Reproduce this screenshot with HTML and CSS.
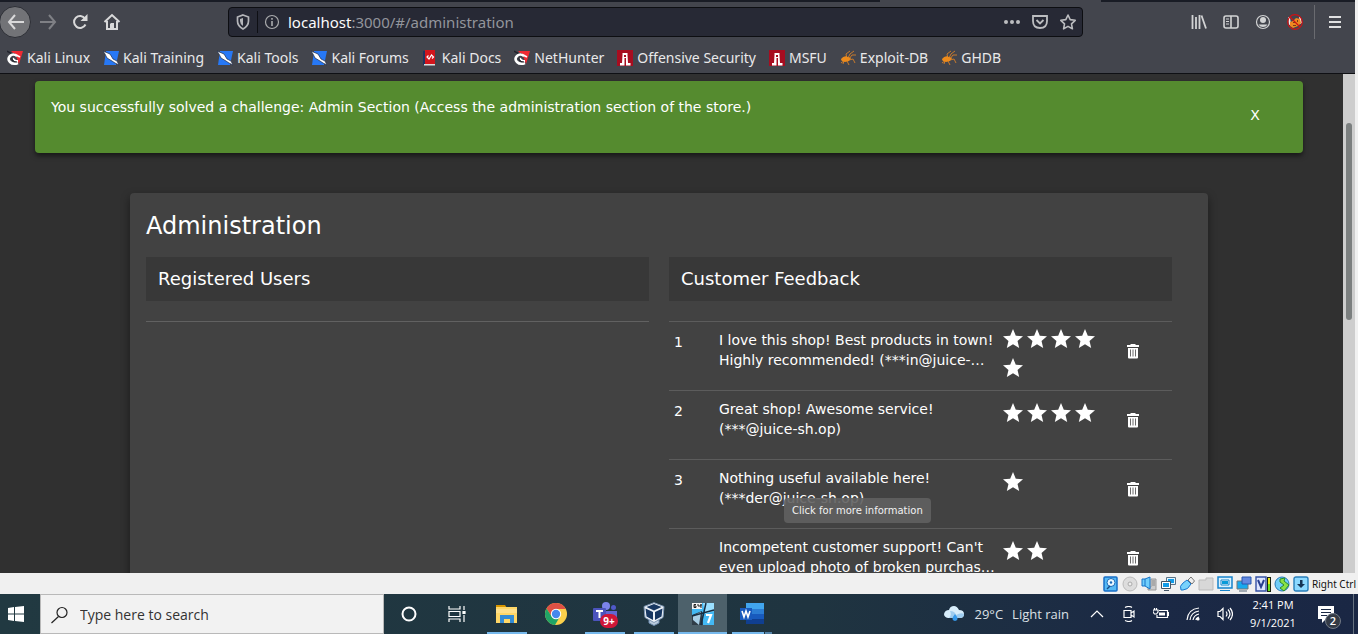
FILE: index.html
```html
<!DOCTYPE html>
<html lang="en">
<head>
<meta charset="utf-8">
<title>Administration</title>
<link rel="stylesheet" href="styles.css">
</head>
<body>
<svg class="defs" aria-hidden="true">
  <symbol id="star" viewBox="0 0 24 24"><path fill="#fff" d="M12 17.27 18.18 21l-1.64-7.03L22 9.24l-7.19-.61L12 2 9.19 8.63 2 9.24l5.46 4.73L5.82 21z"/></symbol>
  <symbol id="trash" viewBox="0 0 14 16"><path fill="#fff" d="M1 2h3.500V1h5v1H13v2H1zM2 5h10v9.500q0 1-1 1H3q-1 0-1-1z"/><path stroke="#6a6a6a" d="M4.500 6.500v7M7 6.500v7M9.500 6.500v7"/></symbol>
  <symbol id="kali" viewBox="0 0 16 16"><path fill="#ef2a33" d="M4 1h12l-4 13-3-8z"/><path fill="none" stroke="#20222c" stroke-width="1.500" d="M0 1q4 3 8 3"/><path fill="none" stroke="#fff" stroke-width="2.600" d="M10 6Q6 3 3 6t0 6q3 3 8 1"/><path fill="none" stroke="#fff" stroke-width="1.800" d="M6 8q1 3 5 3M9 5l4 2"/><path fill="none" stroke="#16181f" d="M5 8q0 4 5 4"/></symbol>
  <symbol id="tool" viewBox="0 0 16 16"><path fill="#2778f5" d="M3 1h13l-3 14H1z"/><path fill="#fff" stroke="#1c2b49" stroke-width=".7" d="m0 1 7 3 3 5 4 2 2 4-4-2-3-2-5-3-2-4z"/></symbol>
  <symbol id="tower" viewBox="0 0 16 16"><path fill="#a70d20" d="M0 0h16v16H0z"/><path fill="#fff" d="M5.500 3h5v2l.5 8h2.500v2.500H9V8H7.500v7.500H3V13h2l.5-8z"/><path fill="#a70d20" d="M7 5h2v2H7z"/></symbol>
  <symbol id="bug" viewBox="0 0 16 16"><g fill="none" stroke="#c87a2c"><path d="M7 9 6 4l4-3M8 8l2-4 4-3M9 9l3-4h4M9 10l4-1 2 4M7 11l2 4M5 10l-4 3M3 9l-2 1M4 11l-1 3"/></g><path fill="#ed8b1c" d="M1 9q3-4 7-2l3 1-2 3-4 1-3-1z"/></symbol>
  <symbol id="windows" viewBox="0 0 16 16"><path fill="#fff" d="m0 2 6-1v6.500H0zM7 1l9-1v7.500H7zM0 8.500h6V15l-6-1zM7 8.500h9V16l-9-1z"/></symbol>
</svg>

<div class="browser">
  <div class="window">
    <div class="tabs"><span class="tab-active"></span></div>
    <div class="toolbar">
      <div class="nav">
        <button class="nav-btn back" aria-label="Back"><svg width="18" height="16" viewBox="0 0 18 16"><path d="M8 1 2 8l6 7M2 8h15" transform="translate(1 0)"/></svg></button>
        <button class="nav-btn dim" aria-label="Forward"><svg width="18" height="16" viewBox="0 0 18 16"><path d="m10 1 6 7-6 7M16 8H1"/></svg></button>
        <button class="nav-btn" aria-label="Reload"><svg width="16" height="16" viewBox="0 0 16 16"><path d="M13.500 10.500A6 6 0 1 1 13 4.500"/><path class="solid" d="M15.500 0v7h-7z"/></svg></button>
        <button class="nav-btn" aria-label="Home"><svg width="18" height="18" viewBox="0 0 18 18"><path d="m1.500 9 7.500-7 7.500 7M4 8v8h10V8" /><path class="solid" d="M8 10h3v6H7v-5z"/></svg></button>
      </div>
      <div class="url">
        <svg width="16" height="16" viewBox="0 0 16 16"><path fill="none" stroke="#b5b6ba" stroke-width="1.700" d="m8 1 5.500 2v4q0 5-5.500 8-5.500-3-5.500-8V3z"/><path fill="#b5b6ba" d="M8 4v8Q5 10 5 7V5z"/></svg>
        <i class="split"></i>
        <svg width="16" height="16" viewBox="0 0 16 16"><circle cx="8" cy="8" r="6.500" fill="none" stroke="#aaabad" stroke-width="1.200"/><path stroke="#aaabad" stroke-width="1.600" d="M8 7v5M8 4v1.700"/></svg>
        <span class="address"><b>localhost</b>:3000/#/administration</span>
        <svg width="18" height="16" viewBox="0 0 18 16" fill="#bcbdc0"><circle cx="3" cy="8" r="2"/><circle cx="9" cy="8" r="2"/><circle cx="15" cy="8" r="2"/></svg>
        <svg class="gap" width="18" height="16" viewBox="0 0 18 16" fill="none" stroke="#bcbdc0" stroke-width="1.800"><path d="M2 2h14v5q0 7-7 7T2 7z"/><path d="m5.500 6 3.500 3.500L12.500 6"/></svg>
        <svg class="gap" width="18" height="18" viewBox="0 0 18 18"><path fill="none" stroke="#bcbdc0" stroke-width="1.600" stroke-linejoin="round" d="m9 2 2.200 4.600 5 .7-3.700 3.500.9 5L9 13.400l-4.400 2.400.9-5-3.700-3.500 5-.7z"/></svg>
      </div>
      <div class="tools">
        <svg width="16" height="16" viewBox="0 0 16 16" stroke="#d2d3d4" stroke-width="1.800"><path d="M1.500 1v14M5 3v12M8.500 1v14M10.500 1.500l4.500 13"/></svg>
        <svg width="16" height="16" viewBox="0 0 16 16" fill="none" stroke="#d2d3d4" stroke-width="1.600"><rect x="1" y="2" width="14" height="12" rx="2"/><path d="M8 2v12"/><path stroke-width="1" d="M3 5h3M3 7.500h3M3 10h3"/></svg>
        <svg width="16" height="16" viewBox="0 0 16 16"><circle cx="8" cy="8" r="6.500" fill="none" stroke="#d2d3d4" stroke-width="1.200"/><circle cx="8" cy="6" r="3" fill="#d2d3d4"/><path fill="#d2d3d4" d="M3.500 10.500h9Q11 13 8 13t-4.500-2.500"/></svg>
        <svg width="16" height="16" viewBox="0 0 16 16"><path fill="#eee" d="m1 3 2 1 1 6-2 1zM12 2l2 2 1 5-2 1z"/><path fill="#ef8720" d="m3 8 3-1 3-3 4 1 1 4-3 3-5 2-3-2z"/><path fill="#7b3c16" d="M6 8h2v1H6zM10 6h1v2h-1zM6 11h3v1H6z"/><path fill="none" stroke="#cf1014" stroke-width="1.200" d="m3 3 10 10M15.300 8A7.300 7.300 0 1 1 .7 8a7.300 7.300 0 0 1 14.600 0"/></svg>
      </div>
      <button class="menu" aria-label="Menu"><svg width="12" height="12" viewBox="0 0 12 12"><path stroke="#e0e0e1" stroke-width="2" d="M0 1h12M0 6h12M0 11h12"/></svg></button>
    </div>
    <nav class="bookmarks">
      <a href="#"><svg><use href="#kali"/></svg>Kali Linux</a>
      <a href="#"><svg><use href="#tool"/></svg>Kali Training</a>
      <a href="#"><svg><use href="#tool"/></svg>Kali Tools</a>
      <a href="#"><svg><use href="#tool"/></svg>Kali Forums</a>
      <a href="#"><svg viewBox="0 0 16 16"><path fill="#20345f" d="M1 1h3v14H1z"/><path fill="#d3151c" d="M3 0h10v14H3z"/><path fill="#ddd" d="M2 14h11v1.500H2z"/><path fill="none" stroke="#fff" stroke-width="1.200" d="M6.500 5.500 5 7l2 2 2.500-4 2 2L10 8.500"/></svg>Kali Docs</a>
      <a href="#"><svg><use href="#kali"/></svg>NetHunter</a>
      <a href="#"><svg><use href="#tower"/></svg>Offensive Security</a>
      <a href="#"><svg><use href="#tower"/></svg>MSFU</a>
      <a href="#"><svg><use href="#bug"/></svg>Exploit-DB</a>
      <a href="#"><svg><use href="#bug"/></svg>GHDB</a>
    </nav>
    <div class="viewport">
      <main class="page">
        <section class="notice">
          <p>You successfully solved a challenge: Admin Section (Access the administration section of the store.)</p>
          <button>X</button>
        </section>
        <section class="card">
          <h1>Administration</h1>
          <div class="columns">
            <section>
              <h2>Registered Users</h2>
              <div class="empty"></div>
            </section>
            <section>
              <h2>Customer Feedback</h2>
              <table>
                <colgroup><col class="c-id"><col class="c-text"><col class="c-stars"><col></colgroup>
                <tbody>
                <tr><td class="id">1</td><td class="comment">I love this shop! Best products in town! Highly recommended! (***in@juice-…</td><td><div class="stars two-lines"><svg><use href="#star"/></svg><svg><use href="#star"/></svg><svg><use href="#star"/></svg><svg><use href="#star"/></svg><svg><use href="#star"/></svg></div></td><td class="action"><button aria-label="Delete"><svg><use href="#trash"/></svg></button></td></tr>
                <tr><td class="id">2</td><td class="comment">Great shop! Awesome service! (***@juice-sh.op)</td><td><div class="stars"><svg><use href="#star"/></svg><svg><use href="#star"/></svg><svg><use href="#star"/></svg><svg><use href="#star"/></svg></div></td><td class="action"><button aria-label="Delete"><svg><use href="#trash"/></svg></button></td></tr>
                <tr><td class="id">3</td><td class="comment">Nothing useful available here! (***der@juice-sh.op)<span class="tooltip" role="tooltip">Click for more information</span></td><td><div class="stars"><svg><use href="#star"/></svg></div></td><td class="action"><button aria-label="Delete"><svg><use href="#trash"/></svg></button></td></tr>
                <tr><td class="id"></td><td class="comment">Incompetent customer support! Can't even upload photo of broken purchas…</td><td><div class="stars"><svg><use href="#star"/></svg><svg><use href="#star"/></svg></div></td><td class="action"><button aria-label="Delete"><svg><use href="#trash"/></svg></button></td></tr>
                </tbody>
              </table>
            </section>
          </div>
        </section>
      </main>
      <div class="scrollbar"><span></span></div>
    </div>
  </div>
</div>

<div class="vm-bar">
  <svg viewBox="0 0 16 16"><rect x="1" y="1" width="13" height="14" rx="1" fill="#55b9f4" stroke="#176dc5" stroke-width="1.500"/><circle cx="8" cy="6.500" r="4" fill="#e9f7ff" stroke="#1769b9"/><circle cx="8" cy="6.500" r="1.200" fill="#1769b9"/><path stroke="#174b88" stroke-width="1.500" d="m7 10-3 3"/></svg>
  <svg viewBox="0 0 16 16"><circle cx="8" cy="8" r="7" fill="#ddd" stroke="#bbb"/><circle cx="8" cy="8" r="2" fill="#eee" stroke="#aaa"/></svg>
  <svg viewBox="0 0 16 16"><path fill="#ccc" stroke="#999" d="M10 3h5v11H7v-3h3z"/><path stroke="#888" d="M11 5h3M11 7h3M11 9h3"/><path fill="#70cffc" stroke="#1473c8" d="M1 3h3l5-2v12l-5-3H1zM4 3v7"/></svg>
  <svg viewBox="0 0 16 16"><path fill="#e2f5ff" stroke="#5a7183" d="M6.500 1.500h9v7h-9z"/><path fill="#119be8" d="M8 3h6v4H8z"/><path fill="#fff" stroke="#456" d="M1.500 5.500h9v7h-9zM4 14.500h5"/><path fill="#119be8" d="M3 7h6v4H3z"/></svg>
  <svg viewBox="0 0 16 16"><path fill="#78d2fc" stroke="#1b79ce" d="M2 14q-2-4 2-7l4-3 4 4q-3 6-8 6z"/><path fill="#eee" stroke="#777" d="m9 4 3-3 3.500 4L13 8z"/></svg>
  <svg viewBox="0 0 16 16"><path fill="#d8d8d8" stroke="#bbb" d="M1 4h7V2h7v12H1z"/></svg>
  <svg viewBox="0 0 16 16"><path fill="#d9f2ff" stroke="#1683cb" stroke-width="1.500" d="M1 1h14v11H1z"/><path fill="#fff" stroke="#1683cb" d="M4 4h8v5H4zM3 14.500h10"/><path fill="#089bd8" d="M5 5h6v3H5z"/></svg>
  <svg viewBox="0 0 16 16"><path fill="#18a9ed" stroke="#777" d="M1 5h11v8H1z"/><path fill="#6389e0" stroke="#2857b0" d="M6 1h9v7H6z"/><path stroke="#567" d="M3 15h8"/></svg>
  <svg viewBox="0 0 16 16"><path fill="#dce5ff" stroke="#3551a4" stroke-width="1.400" d="M1 1h10v14H1z"/><path fill="none" stroke="#283f90" stroke-width="2" d="m3 4 3 7 3-7"/><path fill="#172111" d="M12 1h4v15h-4z"/><path fill="#ecec16" d="M13 2h2v6h-2z"/><path fill="#66df21" d="M13 8h2v7h-2z"/></svg>
  <svg viewBox="0 0 16 16"><circle cx="8" cy="8" r="7" fill="#70ccf8" stroke="#2479b9"/><path fill="#8ae044" stroke="#298a2d" d="m6 3 5-1-1 3 5 4-5 6-4-3 4-3-4-3z"/></svg>
  <svg viewBox="0 0 16 16"><rect x="1" y="1" width="14" height="14" rx="2" fill="#8dd9ff" stroke="#287eb9" stroke-width="1.400"/><path fill="#163454" d="M7 4h2.500v4H12l-4 4-4-4h3z"/></svg>
  <span>Right Ctrl</span>
</div>

<footer class="taskbar">
  <button class="start" aria-label="Start"><svg width="16" height="16"><use href="#windows"/></svg></button>
  <label class="search"><svg width="18" height="18" viewBox="0 0 18 18" fill="none" stroke="#222" stroke-width="1.200"><circle cx="11" cy="6.500" r="5"/><path d="m7.500 10.500-7 6.500"/></svg><input type="text" aria-label="Search" placeholder="Type here to search"></label>
  <div class="apps">
    <button aria-label="Cortana"><svg viewBox="0 0 24 24"><circle cx="12" cy="12" r="6.500" fill="none" stroke="#fff" stroke-width="2"/></svg></button>
    <button aria-label="Task view"><svg viewBox="0 0 24 24" fill="none" stroke="#fff" stroke-width="1.200"><path d="M3 4v3h11V4M3 20v-3h11v3M3 9.500h11v5H3zM18 4v4M18 13v7"/><path fill="#fff" d="M17 9.500h2v2h-2z"/></svg></button>
    <button class="open" aria-label="File Explorer"><svg viewBox="0 0 24 24"><path fill="#d79500" d="M1 3h9l2 3H1z"/><path fill="#ffd767" d="M1 5h21v16H1z"/><path fill="#ffe08a" d="M1 7h21v4H1z"/><path fill="#348cd5" d="M5 13h14v8h-4v-4H9v4H5z"/></svg></button>
    <button aria-label="Chrome"><svg viewBox="0 0 24 24"><circle cx="12" cy="12" r="11" fill="#fbd04b"/><path fill="#de5145" d="M2.500 6.500A11 11 0 0 1 21.800 7H12l-4.300 7.500z"/><path fill="#20a466" d="M2.500 6.500A11 11 0 0 0 11 23l5-8.500H7.700z"/><circle cx="12" cy="12" r="5.200" fill="#fff"/><circle cx="12" cy="12" r="4.200" fill="#4588ed"/></svg></button>
    <button class="open teams" aria-label="Teams"><svg viewBox="0 0 24 24"><circle cx="13" cy="4" r="4" fill="#7b83eb"/><circle cx="20.500" cy="5.500" r="2.500" fill="#5059c9"/><path fill="#6267d2" d="M8 9h16v9q-3 5-10 3z"/><rect y="6" width="13" height="13" rx="1" fill="#4b53bc"/><path stroke="#fff" stroke-width="2" d="M3 9h7M6.500 9v7"/></svg><span class="badge">9+</span></button>
    <button class="open" aria-label="VirtualBox"><svg viewBox="0 0 24 24"><path fill="#b9cbdc" stroke="#6e8caf" d="m7 18 5-2 5 2v3l-5 2.500L7 21z"/><path fill="#eef3f8" stroke="#7f98b5" d="m12 .7 10 3.800-1 11-9 5-9-5-1-11z"/><path fill="#173761" d="m12 2 7.500 3L12 8.500 4.500 5zM3.500 6.500 11 10v8l-6.500-3.500zM20.500 6.500 13 10v8l6.500-3.500z"/></svg></button>
    <button class="open active" aria-label="Windows 7 virtual machine"><svg viewBox="0 0 24 24"><path fill="#43b9f4" d="M1 1h22v22H1z"/><path fill="#9be0ff" d="M12 1h11v8l-9 3z"/><path fill="#303d48" d="M1 13 11 9l1 14H1z"/><path fill="#a8cfe6" d="m2 14 8-4-2 13-6-5z"/><path stroke="#172e43" stroke-width="1.500" d="m15 1-5 22M1 14 23 8"/><path fill="#f4f4f4" d="M1 1h10v6H1z"/><path fill="none" stroke="#222" d="M5 2.500H3v3h2V4H3M7 2v2h3V2v4"/><path fill="none" stroke="#fff" stroke-width="2.200" d="M15 13h5l-3 8"/></svg></button>
    <button class="open stacked" aria-label="Word"><svg viewBox="0 0 24 24"><path fill="#41a5ee" d="M6 1h18v6H6z"/><path fill="#2b7cd3" d="M6 7h18v5H6z"/><path fill="#185abd" d="M6 12h18v5H6z"/><path fill="#103f91" d="M6 17h18v5H6z"/><path fill="#185abd" d="M0 6h12v12H0z"/><path fill="none" stroke="#fff" stroke-width="1.600" d="m2 9 2 6 2-6 2 6 2-6"/></svg></button>
  </div>
  <div class="weather"><svg width="21" height="18" viewBox="0 0 21 18"><path fill="#d7edfb" d="M4 13q-4-1-4-4 1-4 5-4 1-4 5-4 3 0 5 4 5 0 5 4 0 4-4 4z"/><path fill="#9fcdf0" d="M6 6q5 0 6 4 5-3 8-1 0 4-4 4H5q3-3 1-7"/><path fill="#3599eb" d="M11 9q-5 6 0 7 5-1 0-7"/></svg><span>29°C</span><span>Light rain</span></div>
  <div class="tray">
    <svg viewBox="0 0 16 16"><path d="m2 11 6-6 6 6"/></svg>
    <svg viewBox="0 0 16 16"><path d="M3 4.500h7v7H3zM10 7l3-2v6l-3-2M4 1.500q4-2 7 0M4 14.500q4 2 7 0"/></svg>
    <svg viewBox="0 0 16 16"><path d="M6 4.500h8.500v7H4V9M14.500 6.500h1v3h-1M0 4h5v2L3.500 8h-2L0 6zM1.500 2v2M3.500 2v2"/><path fill="#fff" stroke="none" d="M6 6.500h6v3H6z"/></svg>
    <svg viewBox="0 0 16 16"><path d="M2 14Q3 3 14 2M5 14q1-8 9-9M8 14q1-5 6-6M11 14q0-2 3-3"/><circle cx="13" cy="13" r="1" fill="#fff"/></svg>
    <svg viewBox="0 0 16 16"><path d="M1 5.500h2l3-3v11l-3-3H1zM9 5.500q2 2.500 0 5M11 3.500q4 4.500 0 9M13 2q5 6 0 12"/></svg>
  </div>
  <div class="clock"><span>2:41 PM</span><span>9/1/2021</span></div>
  <button class="alerts" aria-label="Notifications"><svg width="16" height="18" viewBox="0 0 16 18"><path fill="#fff" d="M0 1h16v13H8l-4 4v-4H0z"/><path stroke="#1b2944" d="M3 4.500h10M3 7.500h10M3 10.500h6"/></svg><span>2</span></button>
  <i class="desktop-edge"></i>
</footer>
</body>
</html>
```

FILE: styles.css
```css
* { box-sizing: border-box; }

body {
  margin: 0;
  height: 100vh;
  display: flex;
  flex-direction: column;
  overflow: hidden;
  background: #f0f0f0;
  font-family: "DejaVu Sans", sans-serif;
}

svg { display: block; flex: none; }
button { padding: 0; border: 0; background: none; color: inherit; font: inherit; }
.defs { position: absolute; width: 0; height: 0; }

.browser { flex: 1; min-height: 0; display: flex; padding-right: 3px; }
.window { flex: 1; min-width: 0; display: flex; flex-direction: column; background: #43454d; }

.tabs { flex: none; height: 2px; display: flex; justify-content: flex-end; padding-right: 254px; background: #191c25; }
.tab-active { width: 221px; background: #43454d; }

.toolbar { flex: none; height: 40px; display: flex; align-items: center; }
.nav { display: flex; align-items: center; width: 228px; }
.nav-btn { width: 32px; height: 32px; display: grid; place-items: center; }
.nav-btn svg { fill: none; stroke: #d9d9da; stroke-width: 2; }
.nav-btn .solid { fill: #d9d9da; stroke: none; }
.back { width: 32px; margin-left: -1px; margin-right: 1px; border: 1px solid #2c2e35; border-radius: 50%; background: #727377; }
.nav .dim svg { stroke: #7f8085; }

.url {
  flex: 1;
  height: 30px;
  display: flex;
  align-items: center;
  padding: 0 5px 0 6px;
  border: 1px solid #0d0e12;
  border-radius: 4px;
  background: #272935;
}
.split { width: 1px; height: 22px; margin: 0 6px; background: #0e0f14; }
.address { flex: 1; margin-left: 8px; font: 15px/20px "Noto Sans", sans-serif; color: #93959c; }
.address b { font-weight: 400; color: #fbfbfc; }
.url .gap { margin-left: 10px; }

.tools { display: flex; gap: 16px; margin-left: 108px; }
.menu { width: 41px; height: 34px; margin-left: 11px; border-left: 1px solid #6a6b70; display: grid; place-items: center; }

.bookmarks { flex: none; height: 32px; display: flex; align-items: center; gap: 13px; padding-left: 7px; border-bottom: 1px solid #0f1014; }
.bookmarks a { display: flex; align-items: center; gap: 4px; font: 14px/20px "Noto Sans", sans-serif; color: #e9e9ea; text-decoration: none; white-space: nowrap; }
.bookmarks svg { width: 16px; height: 16px; }

.viewport { flex: 1; min-height: 0; display: flex; }
.page { flex: 1; min-width: 0; overflow: hidden; padding: 7px 40px 0 35px; background: #303030; color: #fff; }
.scrollbar { width: 12px; padding: 49px 3px 0; background: #cdcdcd; }
.scrollbar span { display: block; height: 197px; border-radius: 3px; background: #7b7f7f; }

.notice {
  display: flex;
  justify-content: space-between;
  min-height: 72px;
  padding: 16px;
  border-radius: 4px;
  background: #558b2f;
  box-shadow: 0 3px 5px rgba(0, 0, 0, .5);
  font-size: 14px;
  line-height: 20px;
}
.notice p { margin: 0; }
.notice button { width: 64px; height: 36px; line-height: 36px; }

.card {
  margin: 40px 95px 0;
  padding: 16px;
  height: 600px;
  border-radius: 4px;
  background: #424242;
  box-shadow: 0 4px 10px rgba(0, 0, 0, .45);
}
h1 { margin: 0 0 14px; font-size: 24px; line-height: 34px; font-weight: 400; }
.columns { display: grid; grid-template-columns: 1fr 1fr; gap: 20px; padding-right: 20px; }
h2 { margin: 0 0 20px; padding: 10px 12px; background: #383838; font-size: 18px; line-height: 24px; font-weight: 400; }
.empty { border-top: 1px solid #616161; }

table { width: 100%; border-spacing: 0; table-layout: fixed; font-size: 14px; line-height: 20px; }
.c-id { width: 50px; }
.c-text { width: 282px; }
.c-stars { width: 102px; }
td { height: 69px; padding: 0; border-top: 1px solid #5c5c5c; vertical-align: top; }
td.id { padding: 10px 5px; }
td.comment { position: relative; padding: 8px 0; }
.stars { display: flex; flex-wrap: wrap; row-gap: 5px; padding-top: 10px; }
.stars.two-lines { padding-top: 5px; }
.stars svg { width: 24px; height: 24px; }
.action button { display: block; margin: 21px auto 0 23px; }
.action svg { width: 14px; height: 16px; }

.tooltip {
  position: absolute;
  left: 65px;
  top: 38px;
  padding: 4px 8px;
  border-radius: 4px;
  background: rgba(97, 97, 97, .9);
  color: #f2f2f2;
  font-size: 10px;
  line-height: 17px;
  white-space: nowrap;
}

.vm-bar { flex: none; height: 21px; display: flex; align-items: center; justify-content: flex-end; gap: 3px; padding-right: 2px; background: #f0f0f0; }
.vm-bar svg { width: 16px; height: 16px; }
.vm-bar span { font: 10px/16px "Noto Sans", sans-serif; color: #111; }

.taskbar {
  flex: none;
  height: 40px;
  display: flex;
  align-items: stretch;
  background: linear-gradient(90deg, #213941, #1f3440 60%, #1b2945 85%, #1a2744);
  color: #fff;
  font-family: "Open Sans", sans-serif;
}
.start { width: 40px; display: grid; place-items: center; padding-right: 8px; }
.search { width: 344px; display: flex; align-items: center; gap: 11px; padding: 1px 0 0 10px; border: 1px solid #b9b9b9; background: #f2f2f2; }
.search input { flex: 1; min-width: 0; padding: 0; border: 0; outline: 0; background: none; font: 14px/20px "Open Sans", sans-serif; }
.search input::placeholder { color: #333; opacity: 1; }

.apps { display: flex; }
.apps button { position: relative; width: 49px; display: grid; place-items: center; }
.apps svg { width: 24px; height: 24px; }
.apps .open::after { content: ""; position: absolute; left: 5px; right: 4px; bottom: 0; height: 2px; background: #76b9ed; }
.apps .active { background: #4d616b; }
.apps .active::after { left: 0; right: 0; }
.apps .stacked::after { background: linear-gradient(90deg, #76b9ed 32px, #1f3440 32px 33px, #5585aa 33px); }
.badge { position: absolute; left: 20px; top: 20px; width: 18px; height: 14px; border-radius: 7px; background: #cf1638; font-size: 10px; line-height: 14px; font-weight: 700; }

.weather { margin-left: auto; display: flex; align-items: center; gap: 9px; font-size: 13px; color: #dce0e5; white-space: nowrap; }
.tray { display: flex; align-items: center; gap: 16px; margin-left: 20px; }
.tray svg { width: 16px; height: 16px; fill: none; stroke: #fff; stroke-width: 1.2; }
.clock { width: 46px; margin-left: 17px; display: flex; flex-direction: column; align-items: center; justify-content: center; font-size: 11px; line-height: 18px; white-space: nowrap; }
.alerts { position: relative; width: 24px; margin-left: 22px; display: flex; align-items: center; }
.alerts span { position: absolute; left: 7px; top: 19px; width: 16px; height: 16px; border: 1px solid #727a86; border-radius: 50%; background: #343b46; font-size: 11px; line-height: 14px; font-weight: 600; }
.desktop-edge { width: 1px; margin: 0 4px 0 11px; background: #65717f; }
```
